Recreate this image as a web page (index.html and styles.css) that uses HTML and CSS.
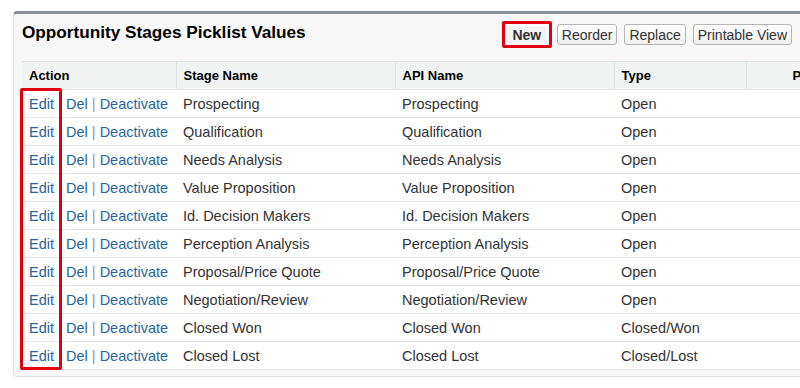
FILE: index.html
```html
<!DOCTYPE html>
<html lang="en">
  <head>
    <title>Opportunity Stages Picklist Values</title>
    <meta charset="utf-8" />
    <link rel="stylesheet" href="styles.css">
  </head>
  <body>
    <div class="panel">
      <div class="panel-head">
        <h2 class="panel-title">Opportunity Stages Picklist Values</h2>
        <div class="buttons">
          <span class="mark"><button class="btn">New</button></span>
          <button class="btn">Reorder</button>
          <button class="btn">Replace</button>
          <button class="btn">Printable View</button>
        </div>
      </div>

      <div class="table-wrap">
        <table class="list">
          <thead>
            <tr>
              <th class="col-action">Action</th>
              <th class="col-stage">Stage Name</th>
              <th class="col-api">API Name</th>
              <th class="col-type">Type</th>
              <th class="col-prob">Probability</th>
            </tr>
          </thead>
          <tbody>
            <tr><td class="actions"><a class="edit" href="#">Edit</a> <a href="#">Del</a> | <a href="#">Deactivate</a></td><td>Prospecting</td><td>Prospecting</td><td>Open</td><td></td></tr>
            <tr><td class="actions"><a class="edit" href="#">Edit</a> <a href="#">Del</a> | <a href="#">Deactivate</a></td><td>Qualification</td><td>Qualification</td><td>Open</td><td></td></tr>
            <tr><td class="actions"><a class="edit" href="#">Edit</a> <a href="#">Del</a> | <a href="#">Deactivate</a></td><td>Needs Analysis</td><td>Needs Analysis</td><td>Open</td><td></td></tr>
            <tr><td class="actions"><a class="edit" href="#">Edit</a> <a href="#">Del</a> | <a href="#">Deactivate</a></td><td>Value Proposition</td><td>Value Proposition</td><td>Open</td><td></td></tr>
            <tr><td class="actions"><a class="edit" href="#">Edit</a> <a href="#">Del</a> | <a href="#">Deactivate</a></td><td>Id. Decision Makers</td><td>Id. Decision Makers</td><td>Open</td><td></td></tr>
            <tr><td class="actions"><a class="edit" href="#">Edit</a> <a href="#">Del</a> | <a href="#">Deactivate</a></td><td>Perception Analysis</td><td>Perception Analysis</td><td>Open</td><td></td></tr>
            <tr><td class="actions"><a class="edit" href="#">Edit</a> <a href="#">Del</a> | <a href="#">Deactivate</a></td><td>Proposal/Price Quote</td><td>Proposal/Price Quote</td><td>Open</td><td></td></tr>
            <tr><td class="actions"><a class="edit" href="#">Edit</a> <a href="#">Del</a> | <a href="#">Deactivate</a></td><td>Negotiation/Review</td><td>Negotiation/Review</td><td>Open</td><td></td></tr>
            <tr><td class="actions"><a class="edit" href="#">Edit</a> <a href="#">Del</a> | <a href="#">Deactivate</a></td><td>Closed Won</td><td>Closed Won</td><td>Closed/Won</td><td></td></tr>
            <tr><td class="actions"><a class="edit" href="#">Edit</a> <a href="#">Del</a> | <a href="#">Deactivate</a></td><td>Closed Lost</td><td>Closed Lost</td><td>Closed/Lost</td><td></td></tr>
          </tbody>
        </table>
        <div class="edit-mark"></div>
      </div>
    </div>
  </body>
</html>
```

FILE: styles.css
```css
html {
  height: 100%;
}
body {
  margin: 0;
  padding: 11px 0 0 13px;
  background: #ffffff;
  color: #333333;
  font-family: "Liberation Sans", Arial, sans-serif;
  font-size: 14.5px;
  overflow: hidden;
}

.panel {
  width: 820px;
  height: 366px;
  background-color: #f8f8f8;
  border-top: 3px solid #8a9097;
  border-left: 1px solid #e2e2e2;
  border-bottom: 1px solid #e2e2e2;
  border-radius: 4px 0 0 4px;
  padding: 0 0 0 8px;
  box-sizing: border-box;
}

.panel-head {
  display: flex;
  align-items: center;
  height: 37px;
  padding-right: 41px;
}

.panel-title {
  margin: 0;
  font-size: 17.2px;
  font-weight: bold;
  color: #000000;
  flex: 1;
}

.buttons {
  display: flex;
  align-items: center;
  gap: 7px;
  margin-top: 4px;
}

.btn {
  font-family: "Liberation Sans", Arial, sans-serif;
  font-size: 14px;
  color: #333333;
  background: linear-gradient(#ffffff, #f0f0f0);
  border: 1px solid #b5b5b5;
  border-radius: 3px;
  height: 21px;
  padding: 0 4px;
  margin: 0;
}

.mark {
  display: inline-flex;
  border: 3px solid #e1000f;
  border-radius: 2px;
  padding: 0 1px;
  height: 21px;
  align-items: center;
  margin-right: -2px;
}

.mark .btn {
  border-color: #ffffff;
  background: #f4f4f4;
  font-weight: bold;
  width: 42px;
  height: 19px;
  padding: 0;
}

.table-wrap {
  position: relative;
  margin-top: 10px;
}

.list {
  border-collapse: collapse;
  table-layout: fixed;
  width: 805px;
  background: #ffffff;
}

.list th {
  background: #f2f3f3;
  font-size: 13px;
  font-weight: bold;
  text-align: left;
  color: #000000;
  height: 28px;
  padding: 0 7px;
  border-top: 1px solid #e0e3e5;
  border-bottom: 1px solid #e0e3e5;
  border-right: 1px solid #e0e3e5;
  box-sizing: border-box;
}

.list td {
  height: 28px;
  padding: 0 7px;
  border-bottom: 1px solid #e8e8e8;
  white-space: nowrap;
  box-sizing: border-box;
}

.col-action { width: 154px; }
.col-stage { width: 219px; }
.col-api { width: 219px; }
.col-type { width: 132px; }
.list th.col-prob { padding-left: 46px; }

.actions {
  color: #8c99a3;
}

.actions a {
  color: #27659b;
  text-decoration: none;
}

.actions a.edit {
  margin-right: 8px;
}

.edit-mark {
  position: absolute;
  left: -2px;
  top: 27px;
  width: 36px;
  height: 276px;
  border: 3px solid #e1000f;
  border-radius: 2px;
}
```
